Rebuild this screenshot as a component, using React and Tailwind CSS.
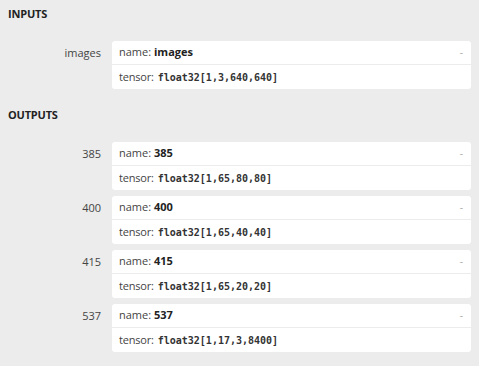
import React from 'react'

const inputs = [{ id: 'images', name: 'images', tensor: 'float32[1,3,640,640]' }]

const outputs = [
  { id: '385', name: '385', tensor: 'float32[1,65,80,80]' },
  { id: '400', name: '400', tensor: 'float32[1,65,40,40]' },
  { id: '415', name: '415', tensor: 'float32[1,65,20,20]' },
  { id: '537', name: '537', tensor: 'float32[1,17,3,8400]' }
]

const SectionHeader = ({ title }) => (
  <div className="h-[29px] pl-2 flex items-center text-[11px] font-bold text-[#222] tracking-[-0.2px]">
    {title}
  </div>
)

const ArgRow = ({ arg }) => (
  <div className="flex">
    <div className="w-[112px] shrink-0 h-[24px] pr-[11px] flex items-center justify-end text-[#444]">
      {arg.id}
    </div>
    <div className="w-[359px] bg-white rounded-[3px]">
      <div className="h-[24px] px-[7px] flex items-center justify-between border-b border-[#ececec]">
        <span className="text-[#444]">
          name: <span className="font-bold text-[#222]">{arg.name}</span>
        </span>
        <span className="text-[#aaa] text-[10px] pr-[1px]">-</span>
      </div>
      <div className="h-[24px] px-[7px] flex items-center text-[#444]">
        <span className="tracking-[-0.2px]">tensor:</span>
        <span className="ml-[4px] font-['DejaVu_Sans_Mono',monospace] text-[10px] font-bold text-[#333]">
          {arg.tensor}
        </span>
      </div>
    </div>
  </div>
)

export default function App() {
  return (
    <div className="w-[479px] h-[366px] bg-[#ececec] overflow-hidden font-['Open_Sans',sans-serif] text-[11px]">
      <SectionHeader title="INPUTS" />
      <div className="mt-[12px] flex flex-col gap-[6px]">
        {inputs.map((arg) => (
          <ArgRow key={arg.id} arg={arg} />
        ))}
      </div>
      <div className="mt-[12px]">
        <SectionHeader title="OUTPUTS" />
      </div>
      <div className="mt-[12px] flex flex-col gap-[6px]">
        {outputs.map((arg) => (
          <ArgRow key={arg.id} arg={arg} />
        ))}
      </div>
    </div>
  )
}
